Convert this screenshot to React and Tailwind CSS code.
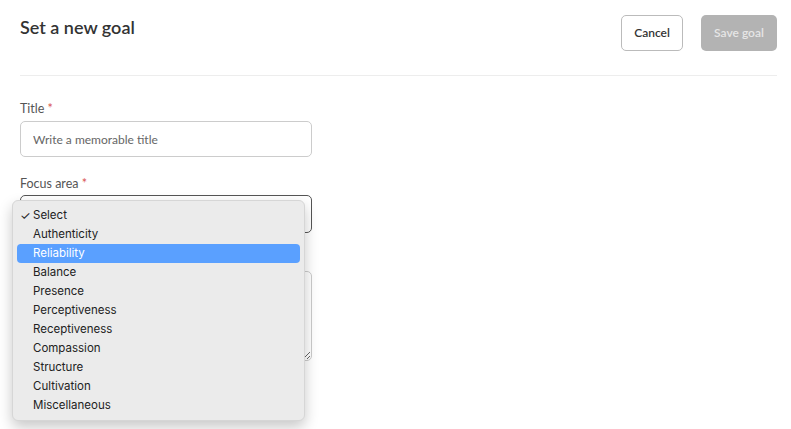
import React from "react";

const options = [
  "Select",
  "Authenticity",
  "Reliability",
  "Balance",
  "Presence",
  "Perceptiveness",
  "Receptiveness",
  "Compassion",
  "Structure",
  "Cultivation",
  "Miscellaneous",
];

const FieldLabel = ({ children }) => (
  <label className="block text-[12.5px] leading-[16px] text-[#555]">
    {children} <span className="text-[#d9534f]">*</span>
  </label>
);

const App = () => {
  const selected = "Select";
  const active = "Reliability";

  return (
    <div
      className="w-[791px] h-[429px] bg-white overflow-hidden pl-5 pr-[14px]"
      style={{ fontFamily: "Lato, 'Open Sans', sans-serif" }}
    >
      {/* Header */}
      <div className="flex justify-between items-start pt-[15px] pb-[24px] border-b border-[#ededed]">
        <h1 className="text-[18px] leading-[22px] font-semibold text-[#333] pt-[1px]">
          Set a new goal
        </h1>
        <div className="flex gap-[18px]">
          <button className="h-[36px] w-[62px] rounded-[5px] border border-[#bbb] bg-white text-[12px] font-semibold text-[#333]">
            Cancel
          </button>
          <button className="h-[36px] w-[76px] rounded-[5px] bg-[#b3b3b3] text-[12px] font-semibold text-[#e6e6e6]">
            Save goal
          </button>
        </div>
      </div>

      {/* Form */}
      <div className="w-[292px] pt-[25px]">
        <FieldLabel>Title</FieldLabel>
        <input
          className="mt-[4px] w-full h-[36px] rounded-[5px] border border-[#ccc] px-3 text-[12px] text-[#333] placeholder:text-[#666] outline-none"
          placeholder="Write a memorable title"
        />

        <div className="mt-[19px]">
          <FieldLabel>Focus area</FieldLabel>
          <div className="relative mt-[3px]">
            <div className="h-[38px] w-full rounded-[5px] border border-[#555] bg-white" />

            {/* Open select menu */}
            <div
              className="absolute left-[-8px] top-[5px] w-[293px] z-10 rounded-[6px] bg-[#ebebeb] border border-[#d6d6d6] shadow-[0_6px_14px_rgba(0,0,0,0.22)] px-[4px] py-[5px]"
              style={{ fontFamily: "Inter, 'Noto Sans', sans-serif" }}
            >
              {options.map((opt) => (
                <div
                  key={opt}
                  className={
                    opt === active
                      ? "relative h-[19px] flex items-center pl-[16px] rounded-[4px] bg-[#5aa0ff] text-white text-[11.5px]"
                      : "relative h-[19px] flex items-center pl-[16px] text-[#222] text-[11.5px]"
                  }
                >
                  {opt === selected && (
                    <span className="absolute left-[3px] text-[12px]">✓</span>
                  )}
                  {opt}
                </div>
              ))}
            </div>
          </div>
        </div>

        {/* Description field, hidden under the open menu */}
        <textarea className="mt-[38px] w-full h-[90px] rounded-[5px] border border-[#ccc] block" />
      </div>
    </div>
  );
};

export default App;
